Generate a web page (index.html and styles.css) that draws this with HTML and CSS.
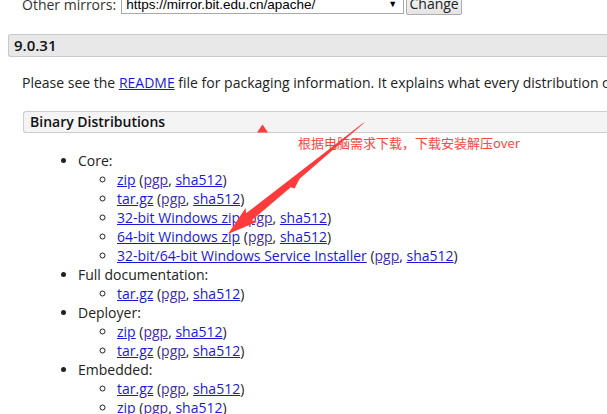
FILE: index.html
```html
<!DOCTYPE html>
<html>
<head>
<meta charset="utf-8">
<link rel="stylesheet" href="styles.css">
</head>
<body>
<div class="page">
  <div class="mirrors">
    <span class="label">Other mirrors:</span>
    <div class="select"><span class="url">https://mirror.bit.edu.cn/apache/</span><span class="caret">▼</span></div>
    <button class="btn">Change</button>
  </div>
  <h3 class="ver">9.0.31</h3>
  <div class="section">
    <p class="intro">Please see the <a href="#">README</a> file for packaging information. It explains what every distribution contains.</p>
    <h4 class="sub">Binary Distributions</h4>
    <ul class="dist">
      <li>Core:
        <ul>
          <li><a href="#">zip</a> (<a href="#" class="v">pgp</a>, <a href="#">sha512</a>)</li>
          <li><a href="#">tar.gz</a> (<a href="#" class="v">pgp</a>, <a href="#">sha512</a>)</li>
          <li><a href="#">32-bit Windows zip</a> (<a href="#" class="v">pgp</a>, <a href="#">sha512</a>)</li>
          <li><a href="#">64-bit Windows zip</a> (<a href="#" class="v">pgp</a>, <a href="#">sha512</a>)</li>
          <li><a href="#">32-bit/64-bit Windows Service Installer</a> (<a href="#" class="v">pgp</a>, <a href="#">sha512</a>)</li>
        </ul>
      </li>
      <li>Full documentation:
        <ul>
          <li><a href="#">tar.gz</a> (<a href="#" class="v">pgp</a>, <a href="#">sha512</a>)</li>
        </ul>
      </li>
      <li>Deployer:
        <ul>
          <li><a href="#">zip</a> (<a href="#" class="v">pgp</a>, <a href="#">sha512</a>)</li>
          <li><a href="#">tar.gz</a> (<a href="#" class="v">pgp</a>, <a href="#">sha512</a>)</li>
        </ul>
      </li>
      <li>Embedded:
        <ul>
          <li><a href="#">tar.gz</a> (<a href="#" class="v">pgp</a>, <a href="#">sha512</a>)</li>
          <li><a href="#">zip</a> (<a href="#" class="v">pgp</a>, <a href="#">sha512</a>)</li>
        </ul>
      </li>
    </ul>
  </div>
</div>
<span class="note">根据电脑需求下载，下载安装解压over</span>
<svg class="marks" width="607" height="414" viewBox="0 0 607 414">
  <polygon points="257,132.5 262.5,124.5 268,132.5" fill="#ff3b3b"/>
  <polygon points="364,123 299.6,178.8 294.6,188.6 290.8,187.2 251.9,220.3 257,221.9 228,234 245.6,207.9 246.1,213.3 363.7,122.4" fill="#ff3b3b"/>
</svg>
</body>
</html>
```
FILE: styles.css
```css
html, body {
  margin: 0;
  padding: 0;
  overflow: hidden;
  background: #fff;
}
body {
  width: 607px;
  height: 414px;
  position: relative;
  font-family: "Open Sans", "Noto Sans", sans-serif;
  font-size: 14px;
  color: #222;
}
.page {
  width: 680px;
}
a {
  color: #1a1ad6;
  text-decoration: underline;
}
a.v {
  color: #3f2fa8;
}
.mirrors {
  display: flex;
  align-items: flex-end;
  margin-top: -6px;
  height: 21px;
  padding-left: 22px;
}
.label {
  line-height: 20px;
  margin-right: 5px;
  color: #333;
}
.select {
  border: 1px solid #a9a9a9;
  display: flex;
  align-items: center;
  justify-content: space-between;
  font-family: "Liberation Sans", Arial, sans-serif;
  font-size: 13.5px;
  color: #000;
  padding: 0 6px 0 4px;
  box-sizing: border-box;
  width: 283px;
  height: 20px;
  margin-bottom: 1px;
}
.caret {
  font-size: 9px;
}
.btn {
  margin-left: 2px;
  height: 22px;
  width: 56px;
  border: 1px solid #adadad;
  border-radius: 2px;
  background: linear-gradient(#f6f6f6, #e4e4e4);
  font-family: "Open Sans", sans-serif;
  font-size: 14px;
  line-height: 18px;
  color: #222;
  padding: 0;
}
.ver {
  margin: 19px 0 0 8px;
  height: 23px;
  box-sizing: border-box;
  border: 1px solid #c8c8c8;
  border-right: none;
  border-radius: 3px 0 0 3px;
  background: #e8e8e8;
  font-size: 15px;
  font-weight: 600;
  line-height: 21px;
  padding-left: 5px;
  color: #111;
}
.section {
  padding-left: 22px;
}
.intro {
  margin: 16px 0 0 0;
  line-height: 20px;
  white-space: nowrap;
}
.sub {
  margin: 18px 0 0 1px;
  height: 22px;
  box-sizing: border-box;
  border: 1px solid #cdcdcd;
  border-right: none;
  border-radius: 3px 0 0 3px;
  background: #f4f4f4;
  font-size: 14px;
  font-weight: 600;
  line-height: 20px;
  padding-left: 6px;
  color: #111;
}
.dist {
  margin: 18px 0 0 0;
  padding-left: 56px;
  line-height: 19px;
  list-style: disc;
}
.dist ul {
  margin: 0;
  padding-left: 39px;
  list-style: circle;
}
.note {
  position: absolute;
  left: 298px;
  top: 134px;
  font-family: "Noto Sans CJK SC", sans-serif;
  font-size: 13px;
  line-height: 18px;
  color: #ff4545;
  white-space: nowrap;
}
.marks {
  position: absolute;
  left: 0;
  top: 0;
  pointer-events: none;
}
```
